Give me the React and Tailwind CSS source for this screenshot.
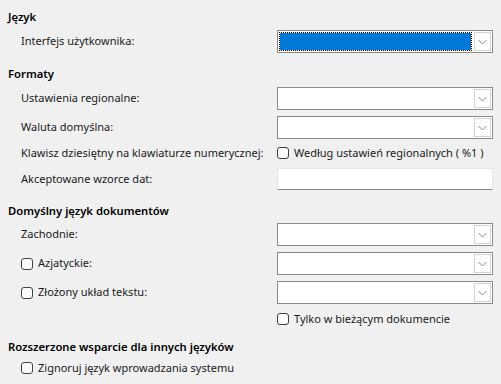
import React from "react";

const font = { fontFamily: '"Noto Sans", "Open Sans", sans-serif' };

function Chevron() {
  return (
    <svg width="9" height="6" viewBox="0 0 9 6" className="block">
      <path d="M0.5 1 L4.5 5 L8.5 1" fill="none" stroke="#7a7a7a" strokeWidth="0.9" />
    </svg>
  );
}

function Combo({ selected }) {
  return (
    <div className="flex h-[23px] w-[216px] border border-[#8b8b8b] bg-white">
      <div className="flex-1 p-[1px]">
        {selected ? (
          <div className="m-[1px] h-[calc(100%-2px)] bg-[#0078d7] outline-1 outline-dotted outline-black" />
        ) : null}
      </div>
      <div className="m-[1px] flex w-[17px] items-center justify-center border border-[#d4d4d4] bg-white">
        <Chevron />
      </div>
    </div>
  );
}

function Box() {
  return <div className="h-[12px] w-[12px] shrink-0 rounded-[3px] border border-[#404040] bg-[#fbfbfb]" />;
}

function Header({ children, className = "" }) {
  return (
    <div className={`flex h-[18px] items-center whitespace-nowrap pl-[8px] text-[11.25px] font-semibold text-black ${className}`}>
      {children}
    </div>
  );
}

function Row({ label, children, className = "", h = "h-[23px]" }) {
  return (
    <div className={`flex ${h} items-center ${className}`}>
      <div className="w-[277px] shrink-0 whitespace-nowrap pl-[21px]">{label}</div>
      <div className="flex items-center">{children}</div>
    </div>
  );
}

function CheckLabel({ children }) {
  return (
    <div className="flex items-center gap-[5px] whitespace-nowrap">
      <Box />
      <span>{children}</span>
    </div>
  );
}

export default function App() {
  return (
    <div className="h-[384px] w-[501px] overflow-hidden bg-[#f0f0f0] text-[11px] text-[#1a1a1a]" style={font}>
      <Header className="mt-[8px]">Język</Header>
      <Row className="mt-[4px]" label="Interfejs użytkownika:">
        <Combo selected />
      </Row>

      <Header className="mt-[12px]">Formaty</Header>
      <Row className="mt-[4px]" label="Ustawienia regionalne:">
        <Combo />
      </Row>
      <Row className="mt-[6px]" label="Waluta domyślna:">
        <Combo />
      </Row>
      <Row className="mt-[3px]" h="h-[22px]" label="Klawisz dziesiętny na klawiaturze numerycznej:">
        <CheckLabel>Według ustawień regionalnych ( %1 )</CheckLabel>
      </Row>
      <Row className="mt-[4px]" h="h-[22px]" label="Akceptowane wzorce dat:">
        <div className="h-[22px] w-[216px] border border-[#e4e4e4] border-b-[#868686] bg-white" />
      </Row>

      <Header className="mt-[12px]">Domyślny język dokumentów</Header>
      <Row className="mt-[3px]" label="Zachodnie:">
        <Combo />
      </Row>
      <Row className="mt-[6px]" label={<CheckLabel>Azjatyckie:</CheckLabel>}>
        <Combo />
      </Row>
      <Row className="mt-[6px]" label={<CheckLabel>Złożony układ tekstu:</CheckLabel>}>
        <Combo />
      </Row>
      <Row className="mt-[4px]" h="h-[22px]" label="">
        <CheckLabel>Tylko w bieżącym dokumencie</CheckLabel>
      </Row>

      <Header className="mt-[8px]">Rozszerzone wsparcie dla innych języków</Header>
      <div className="mt-[2px] flex h-[20px] items-center pl-[21px]">
        <CheckLabel>Zignoruj język wprowadzania systemu</CheckLabel>
      </div>
    </div>
  );
}
